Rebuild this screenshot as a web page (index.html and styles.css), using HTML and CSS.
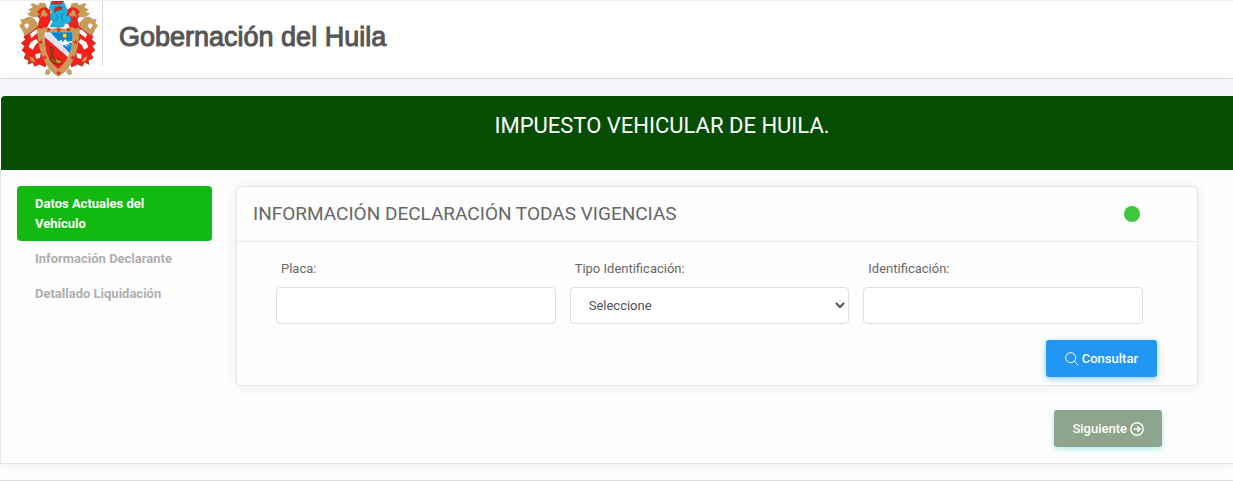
FILE: index.html
```
<!DOCTYPE html>
<html lang="es">
  <head>
    <meta charset="UTF-8" />
    <meta name="viewport" content="width=device-width, initial-scale=1.0" />
    <title>Gobernación del Huila - Impuesto vehicular</title>
    <link rel="stylesheet" href="styles.css">
  </head>
  <body>
    <header class="top">
      <svg class="crest" viewBox="48 0 252 231" role="img" aria-label="Escudo del Huila">
        <!-- mantling -->
        <g id="mantle">
          <path d="M150 28 L136 18 124 16 112 22 104 30 96 28 98 42 112 44 120 54 114 74 104 84 92 94 72 106 76 116 64 126 74 136 66 148 78 158 72 172 86 178 84 190 98 184 104 196 118 190 136 198 150 150 140 80 152 56Z" fill="#f5201a" stroke="#8a3a20" stroke-width="2"/>
          <path d="M136 8 L120 6 114 14 100 8 92 10 100 18 86 26 96 32 82 38 92 46 106 48 120 42 112 32 122 22 138 18Z" fill="#c99b55" stroke="#8a6a3c" stroke-width="1"/>
          <path d="M98 50 L84 48 70 56 62 54 66 66 58 74 66 84 74 102 88 96 98 86 110 80 112 66Z" fill="#c99b55" stroke="#8a6a3c" stroke-width="1"/>
          <path d="M72 72 L82 66 88 74 80 84Z M104 88 L116 84 114 96 102 104 94 112 90 100Z M92 124 L108 114 116 122 106 132 98 146 86 138Z M106 160 L122 156 120 170 108 174Z" fill="#fff"/>
          <path d="M126 30 L134 26 138 36 146 40 136 48 128 44 120 52 124 38Z" fill="#c99b55"/>
          <path d="M88 166 L100 170 106 184 94 180Z" fill="#c99b55"/>
          <path d="M138 208 L146 204 152 212 144 222 136 218Z" fill="#c9a571" stroke="#7a5a30" stroke-width="1"/>
        </g>
        <use href="#mantle" transform="matrix(-1 0 0 1 351 0)"/>
        <circle cx="55" cy="154" r="2" fill="#888"/>
        <!-- helmet -->
        <path d="M154 0 H190 L196 14 204 30 198 44 Q214 42 214 58 Q210 70 196 67 L190 78 H150 L158 62 150 50 156 34 148 22Z" fill="#1fb0dc" stroke="#116a8c" stroke-width="1"/>
        <path d="M160 0 L190 0 184 8 166 10 152 8Z M163 22 L178 15 188 20 184 26 170 29 164 36Z" fill="#e3211d" stroke="#542" stroke-width="1"/>
        <path d="M168 40 L174 50 166 60 M188 36 L184 50 190 62" fill="none" stroke="#0876a0" stroke-width="2"/>
        <!-- shield -->
        <path d="M113 79 Q124 87 134 78 Q155 91 175 78 Q195 91 217 78 Q226 87 238 79 Q240 125 225 164 Q207 210 175 226 Q143 208 126 164 Q110 125 113 79Z" fill="#c99b55" stroke="#8a6a3c" stroke-width="1"/>
        <path d="M134 94 H217 Q219 132 207 161 Q196 190 175 204 Q150 188 139 154 Q131 123 134 94Z" fill="#e2e2ea"/>
        <path d="M151 94 H217 Q219 128 209 157Z" fill="#0787d5"/>
        <path d="M134 108 L204 169 Q192 192 175 204 Q150 188 139 154 Q133 130 134 108Z" fill="#ee211c"/>
        <circle cx="194" cy="104" r="7" fill="#ffe51d" stroke="#685e12" stroke-width="2"/>
        <path d="M174 122 L184 116 188 124 196 114 202 122 216 120 216 125 204 126 212 134 198 128 204 138 192 131 186 135 182 127Z" fill="#f8fafc"/>
        <path d="M151 137 L160 144 158 160 Q158 175 169 177 L176 171 186 180 179 190 164 188 150 178 155 164Z" fill="#a84c17" stroke="#512b17" stroke-width="2"/>
        <path d="M168 176 L175 184 183 181" fill="none" stroke="#f5bd29" stroke-width="4"/>
        <g fill="#e72722">
          <path id="star" d="M146 77 L148 83 154 83 149 87 151 93 146 89 141 93 143 87 138 83 144 83Z"/>
          <use href="#star" x="30" y="2"/>
          <use href="#star" x="59" y="0"/>
          <use href="#star" x="-24" y="38"/>
          <use href="#star" x="81" y="38"/>
          <use href="#star" x="-12" y="84"/>
          <use href="#star" x="72" y="84"/>
          <use href="#star" x="30" y="131"/>
        </g>
      </svg>
      <h1>Gobernación del Huila</h1>
    </header>

    <main class="panel">
      <div class="banner">
        <h2>IMPUESTO VEHICULAR DE HUILA.</h2>
      </div>
      <div class="content">
        <nav class="steps">
          <a href="#vehiculo" class="active">Datos Actuales del Vehículo</a>
          <a href="#declarante">Información Declarante</a>
          <a href="#liquidacion">Detallado Liquidación</a>
        </nav>

        <form class="wizard" action="">
          <section class="card" id="vehiculo">
            <div class="card-head">
              <h3>INFORMACIÓN DECLARACIÓN TODAS VIGENCIAS</h3>
              <span class="status"></span>
            </div>
            <div class="fields">
              <div class="field">
                <label for="placa">Placa:</label>
                <input type="text" name="placa" id="placa" />
              </div>
              <div class="field">
                <label for="tipo">Tipo Identificación:</label>
                <select name="tipo" id="tipo">
                  <option value="">Seleccione</option>
                </select>
              </div>
              <div class="field">
                <label for="identificacion">Identificación:</label>
                <input type="text" name="identificacion" id="identificacion" />
              </div>
            </div>
            <div class="actions">
              <button type="button" class="btn btn-search">
                <svg viewBox="0 0 14 14" aria-hidden="true">
                  <circle cx="5.7" cy="5.7" r="5" />
                  <path d="M9.4 9.4 L13.4 13.4" />
                </svg>
                Consultar
              </button>
            </div>
          </section>
          <div class="next">
            <button type="button" class="btn btn-next">
              Siguiente
              <svg viewBox="0 0 14 14" aria-hidden="true">
                <circle cx="7" cy="7" r="6.2" />
                <path d="M3.7 7 H10 M7.3 4.2 L10.1 7 L7.3 9.8" />
              </svg>
            </button>
          </div>
        </form>
      </div>
    </main>
    <footer></footer>
  </body>
</html>
```
FILE: styles.css
```
* {
  margin: 0;
  padding: 0;
  box-sizing: border-box;
}

body {
  font-family: Roboto, sans-serif;
  font-size: 13px;
  line-height: 20px;
  color: #666;
  background: #fdfdfd;
}

/* header */
.top {
  display: flex;
  align-items: flex-start;
  padding-left: 16px;
  height: 79px;
  background: #fff;
  border-top: 1px solid #f0f0f0;
  border-bottom: 1px solid #dcdce2;
}
.crest {
  width: 84px;
  height: 77px;
}
.top h1 {
  margin-left: 2px;
  padding: 16px 0 9px 16px;
  border-left: 1px solid #d8d8dc;
  font-family: "Liberation Sans Narrow", "Liberation Sans", Arial, sans-serif;
  font-size: 27px;
  font-weight: 400;
  line-height: 40px;
  color: #555;
  -webkit-text-stroke: 1px #555;
}

/* main panel */
.panel {
  border-top: 17px solid #f5f5f9;
  background: #fefefe;
  box-shadow: 0 1px 15px rgba(0, 0, 0, 0.06);
  border-bottom: 1px solid #e6e6e6;
}
.banner {
  height: 74px;
  margin-left: 1px;
  padding: 16px 0 0 90px;
  border-radius: 4px 0 0 0;
  background: #064d04;
  text-align: center;
}
.banner h2 {
  font-size: 22px;
  font-weight: 400;
  line-height: 28px;
  color: #fff;
}
.content {
  display: grid;
  grid-template-columns: 195px 1fr;
  gap: 24px;
  padding: 16px 35px 16px 16px;
  border-left: 1px solid #e6e6e6;
}

.steps a {
  display: block;
  padding: 8px 18px 7px;
  border-radius: 4px;
  font-weight: 700;
  color: #aeaeae;
  text-decoration: none;
}
.steps .active {
  background: #11b911;
  color: #fff;
}

.card {
  border: 1px solid #e4e4e4;
  border-radius: 4px;
  background: #fefefe;
  box-shadow: 0 1px 15px rgba(0, 0, 0, 0.08);
}
.card-head {
  display: flex;
  align-items: center;
  justify-content: space-between;
  height: 55px;
  padding: 0 57px 0 16px;
  border-bottom: 1px solid #e8e8e8;
}
.card-head h3 {
  font-size: 19px;
  font-weight: 400;
}
.status {
  width: 16px;
  height: 16px;
  border-radius: 50%;
  background: #3fc73e;
}
.fields {
  display: grid;
  grid-template-columns: repeat(3, 1fr);
  gap: 14px;
  padding: 17px 54px 16px 39px;
}
.field label {
  display: block;
  margin-bottom: 8px;
  padding-left: 5px;
}
.field input,
.field select {
  display: block;
  width: 100%;
  height: 37px;
  padding: 0 14px;
  border: 1px solid #dfdfdf;
  border-radius: 4px;
  background: #fff;
  font: inherit;
  color: #4e5155;
}

.actions,
.next {
  display: flex;
  justify-content: flex-end;
}
.actions {
  padding: 0 40px 8px 0;
}
.next {
  padding: 24px 36px 0 0;
}
.btn {
  display: flex;
  align-items: center;
  gap: 3px;
  height: 37px;
  padding: 0 19px;
  border: 0;
  border-radius: 3px;
  font: inherit;
  font-weight: 500;
  color: #fff;
}
.btn svg {
  width: 14px;
  height: 14px;
  fill: none;
  stroke: currentColor;
}
.btn-search {
  background: #2196f3;
  box-shadow: 0 2px 6px rgba(33, 150, 243, 0.5);
}
.btn-next {
  padding: 0 18px;
  background: #8ca58c;
  box-shadow: 0 2px 6px rgba(29, 201, 183, 0.35);
}
.btn-next svg {
  stroke-width: 1.4;
}

footer {
  margin-top: 16px;
  border-top: 1px solid #dcdce0;
}
```
